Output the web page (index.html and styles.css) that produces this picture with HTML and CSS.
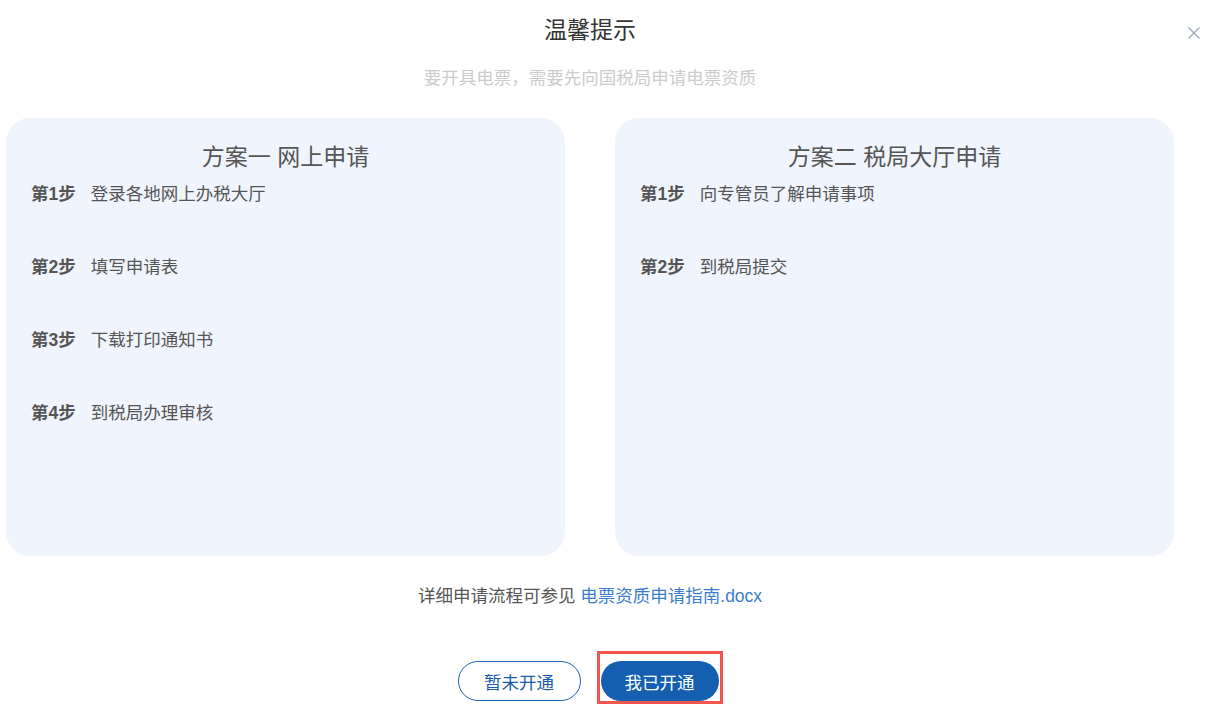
FILE: index.html
```html
<!DOCTYPE html>
<html lang="zh-CN">
<head>
    <meta charset="UTF-8">
    <title>温馨提示</title>
    <link rel="stylesheet" href="styles.css">
</head>
<body>
    <div class="dialog">
        <button class="close-btn" aria-label="关闭">
            <svg width="14" height="14" viewBox="0 0 14 14">
                <path d="M1.5 1.5 L12.5 12.5 M12.5 1.5 L1.5 12.5" stroke="#9aa8bd" stroke-width="1.3" fill="none"/>
            </svg>
        </button>

        <h1 class="title">温馨提示</h1>
        <p class="subtitle">要开具电票，需要先向国税局申请电票资质</p>

        <div class="plans">
            <div class="plan">
                <h2>方案一 网上申请</h2>
                <div class="step"><b>第1步</b><span>登录各地网上办税大厅</span></div>
                <div class="step"><b>第2步</b><span>填写申请表</span></div>
                <div class="step"><b>第3步</b><span>下载打印通知书</span></div>
                <div class="step"><b>第4步</b><span>到税局办理审核</span></div>
            </div>
            <div class="plan">
                <h2>方案二 税局大厅申请</h2>
                <div class="step"><b>第1步</b><span>向专管员了解申请事项</span></div>
                <div class="step"><b>第2步</b><span>到税局提交</span></div>
            </div>
        </div>

        <p class="guide">详细申请流程可参见 <a href="#">电票资质申请指南.docx</a></p>

        <div class="actions">
            <button class="btn btn-outline">暂未开通</button>
            <span class="highlight"><button class="btn btn-primary">我已开通</button></span>
        </div>
    </div>
</body>
</html>
```

FILE: styles.css
```css
body {
    margin: 0;
    font-family: "Liberation Sans", "Noto Sans CJK SC", sans-serif;
    background: #fff;
}

.dialog {
    width: 1180px;
    position: relative;
    text-align: center;
}

.close-btn {
    position: absolute;
    top: 26px;
    left: 1187px;
    width: 14px;
    height: 14px;
    padding: 0;
    border: none;
    background: none;
    cursor: pointer;
}
.close-btn svg { display: block; }

.title {
    margin: 0;
    padding-top: 15px;
    font-size: 23px;
    line-height: 30px;
    font-weight: normal;
    color: #333;
}

.subtitle {
    margin: 21px 0 0;
    font-size: 17.5px;
    line-height: 24px;
    color: #cccccc;
}

.plans {
    display: flex;
    gap: 50px;
    padding: 0 6px;
    margin-top: 28px;
}

.plan {
    flex: 1;
    height: 438px;
    box-sizing: border-box;
    padding: 24px 25px 0;
    background: #f0f4fc;
    border-radius: 24px;
    text-align: left;
}

.plan h2 {
    margin: 0 0 10px;
    font-size: 23px;
    line-height: 30px;
    font-weight: normal;
    color: #555;
    text-align: center;
}

.step {
    font-size: 17.5px;
    line-height: 24px;
    color: #555;
    margin-bottom: 49px;
}
.step b {
    font-weight: bold;
    margin-right: 15px;
}

.guide {
    margin: 28px 0 0;
    font-size: 17.5px;
    line-height: 24px;
    color: #555;
}
.guide a {
    color: #3d7dcc;
    text-decoration: none;
}

.actions {
    margin-top: 43px;
    display: flex;
    justify-content: center;
    align-items: flex-end;
    gap: 16px;
}

.btn {
    height: 40px;
    border-radius: 20px;
    font-family: inherit;
    font-size: 17.5px;
    cursor: pointer;
    box-sizing: border-box;
    padding: 0;
}

.btn-outline {
    width: 123px;
    margin-bottom: 3px;
    background: #fff;
    color: #1a5cab;
    border: 1px solid #1f5fae;
}

.btn-primary {
    width: 118px;
    background: #145fb0;
    color: #fff;
    border: none;
    display: block;
}

.highlight {
    display: block;
    border: 3px solid #f0564e;
    padding: 7px 0 0 1px;
    width: 119px;
}
```
